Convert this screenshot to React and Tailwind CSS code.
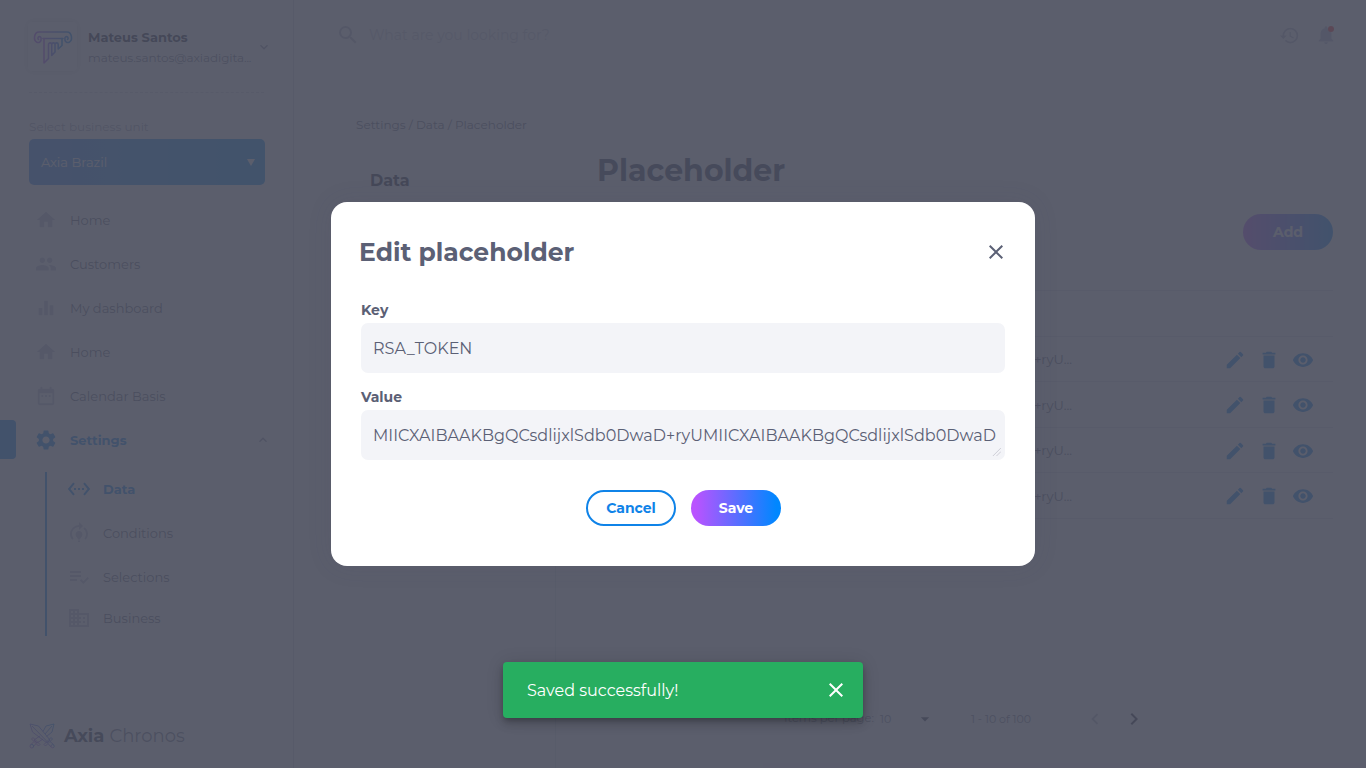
import {
  MdArrowDropDown, MdBusiness, MdChevronLeft, MdChevronRight, MdClose, MdDateRange, MdDelete, MdEdit,
  MdEqualizer, MdExpandLess, MdExpandMore, MdHistory, MdHome, MdModelTraining, MdNotifications, MdPeople,
  MdPlaylistAddCheck, MdSearch, MdSettings, MdSettingsEthernet, MdVisibility,
} from "react-icons/md";

const nav = [
  { label: "Home", Icon: MdHome },
  { label: "Customers", Icon: MdPeople },
  { label: "My dashboard", Icon: MdEqualizer },
  { label: "Home", Icon: MdHome },
  { label: "Calendar Basis", Icon: MdDateRange },
];

const subNav = [
  { label: "Conditions", Icon: MdModelTraining, height: "h-[44px]" },
  { label: "Selections", Icon: MdPlaylistAddCheck, height: "h-[44px]" },
  { label: "Business", Icon: MdBusiness, height: "h-[38px]" },
];

function ColumnLogo() {
  return (
    <svg viewBox="0 0 40 34" className="h-[34px] w-[40px]" fill="none" strokeWidth="1.6" strokeLinejoin="round" strokeLinecap="round">
      <defs>
        <linearGradient id="column" x1="0" y1="0" x2="1" y2="0">
          <stop offset="0" stopColor="#b14bf4" />
          <stop offset="1" stopColor="#0a87f0" />
        </linearGradient>
      </defs>
      <g stroke="url(#column)">
        <path d="M10 8.500H30M5.500 9.500a1.600 1.600 0 1 1 2.600-1.200C8.600 11.500 6 13.200 3.800 12.200C.2 10.500 .8 2 6 2H34c5.200 0 5.800 8.500 2.200 10.200C34 13.200 31.400 11.500 31.900 8.300A1.600 1.600 0 1 1 34.500 9.500" />
        <path d="M11 8.500V33L15.500 28.500V14.500a1.600 1.600 0 0 1 3.200 0V25.500L22 22V14.500a1.600 1.600 0 0 0-3.200 0M22 20.500V14.500a1.600 1.600 0 0 1 3.200 0V19L29 15.500V8.500" />
      </g>
    </svg>
  );
}

function SwordsLogo() {
  return (
    <svg viewBox="0 0 26 26" className="h-[26px] w-[26px]" fill="none" strokeWidth="0.9" strokeLinejoin="round">
      <defs>
        <linearGradient id="swords" x1="0" y1="1" x2="1" y2="0">
          <stop offset="0" stopColor="#c44be4" />
          <stop offset="1" stopColor="#0a87f0" />
        </linearGradient>
      </defs>
      <g stroke="url(#swords)">
        <path d="M1 1l8.500 2L21 17l-3 3L3.500 9zM3 3l15.500 16M15 21.500l7-7 1.500 1.500-7 7zM19 20.500l3 3.500M21 18.500l3.500 3" />
        <circle cx="23.600" cy="23.200" r="1.600" />
        <path d="M14 8.500L17 3l8-2-2 8-5.500 4.500M23 3l-7 8M11 13L5 17l3 3 6-4M2.500 16l7 7L11 21.500l-7-7zM5 18.500l-3 3M7 20.500L4 24" />
        <circle cx="2.800" cy="23.200" r="1.800" />
      </g>
    </svg>
  );
}

function Sidebar() {
  return (
    <aside className="flex w-[294px] shrink-0 flex-col border-r border-[#d5d7df] bg-white">
      <div className="mx-[29px] flex h-[93px] items-start border-b border-dashed border-[#d0d3dc] pt-[22px]">
        <div className="-ml-[1px] flex size-[49px] shrink-0 items-center justify-center rounded-[4px] bg-white shadow-[0_0_8px_rgba(0,0,0,0.2)]">
          <ColumnLogo />
        </div>
        <div className="ml-[11px] w-[172px] shrink-0 pt-[5px] whitespace-nowrap">
          <div className="text-[13px] leading-[20px] font-bold text-[#20253a]">Mateus Santos</div>
          <div className="pt-[1px] text-[12px] leading-[20px] tracking-[-0.08px] text-[#6b7084]">mateus.santos@axiadigita...</div>
        </div>
        <MdExpandMore className="mt-[17px] -ml-[4px] size-[16px] shrink-0 text-[#8a90a4]" />
      </div>

      <div className="mx-[29px] mt-[25px] h-[21px] text-[12px] leading-[18px] text-[#9ca1b0]">Select business unit</div>
      <div className="mx-[29px] flex h-[46px] w-[236px] items-center justify-between rounded-[5px] bg-linear-to-r/srgb from-[#3087f4] to-[#0090f4] pr-[10px] pl-[12px] text-[13px] text-white">
        <span className="pt-[2px]">Axia Brazil</span>
        <svg viewBox="0 0 8 7" className="h-[7px] w-[8px]" fill="currentColor"><path d="M0 0h8L4 7z" /></svg>
      </div>

      <nav className="mt-[13px] text-[13px] text-[#5b6075]">
        {nav.map(({ label, Icon }, i) => (
          <div key={i} className="flex h-[44px] items-center pl-[35px]">
            <Icon className="size-[22px] text-[#bcc0d6]" />
            <span className="ml-[13px] pt-[2px]">{label}</span>
          </div>
        ))}
        <div className="flex h-[44px] items-center text-[#0080f0]">
          <div className="mb-[1px] h-[39px] w-[16px] rounded-r-[4px] bg-[#0080f0]" />
          <MdSettings className="ml-[18px] size-[24px]" />
          <span className="ml-[12px] pt-[2px] font-bold">Settings</span>
          <MdExpandLess className="mr-[22px] ml-auto size-[16px] text-[#8a90a4]" />
        </div>
        <div className="mt-[10px] ml-[45px] flex h-[164px] flex-col border-l-2 border-[#0080f0]">
          <div className="mt-[-5px] flex h-[44px] shrink-0 items-center pl-[20px] text-[#0080f0]">
            <MdSettingsEthernet className="size-[24px]" />
            <span className="ml-[12px] pt-[2px] font-bold">Data</span>
          </div>
          {subNav.map(({ label, Icon, height }) => (
            <div key={label} className={"flex shrink-0 items-center pl-[20px] " + height}>
              <Icon className="size-[24px] text-[#bcc0d6]" />
              <span className="ml-[12px] pt-[2px]">{label}</span>
            </div>
          ))}
        </div>
      </nav>

      <div className="mt-auto mb-[19px] ml-[29px] flex items-center text-[18px] leading-[26px] text-[#30354a]">
        <SwordsLogo />
        <span className="ml-[9px] font-bold">Axia</span>
        <span className="ml-[5px] text-[#6b7084]">Chronos</span>
      </div>
    </aside>
  );
}

function Row({ height }) {
  return (
    <div className={"flex items-center border-b border-[#dfe1e8] text-[13px] text-[#5b6075] " + height}>
      <span className="ml-[150px] w-[325px] pt-[2px] text-right whitespace-nowrap">MIICXAIBAAKBgQCsdlijxlSdb0DwaD+ryU...</span>
      <div className="mr-[19px] ml-auto flex gap-[12px] pt-[1px] text-[#0080f0]">
        <MdEdit className="size-[22px]" />
        <MdDelete className="size-[22px]" />
        <MdVisibility className="size-[22px]" />
      </div>
    </div>
  );
}

function Page() {
  return (
    <div className="flex h-full min-w-0 flex-1 flex-col bg-[#fafafc]">
      <header className="flex h-[70px] shrink-0 items-center bg-white pr-[29px] pl-[36px]">
        <div className="flex h-[46px] w-[420px] items-center rounded-[5px] bg-[#fafafc] pl-[6px] text-[14px] text-[#c9ccd6]">
          <MdSearch className="size-[24px] text-[#b4b8c6]" />
          <span className="ml-[9px]">What are you looking for?</span>
        </div>
        <MdHistory className="ml-auto size-[21px] text-[#b4b8cb]" />
        <div className="relative ml-[15px]">
          <MdNotifications className="size-[22px] text-[#b4b8d0]" />
          <span className="absolute top-[2px] right-[3px] size-[6px] rounded-full bg-[#ff2020]" />
        </div>
      </header>

      <div className="mt-[46px] ml-[62px] h-[18px] text-[12px] leading-[18px] text-[#5b6075]">Settings / Data / Placeholder</div>
      <div className="flex min-h-0 flex-1">
        <div className="flex w-[262px] shrink-0 flex-col">
          <div className="h-[106px] pt-[35px] pl-[76px] text-[16px] font-bold text-[#20253a]">Data</div>
          <div className="flex-1 border-r border-[#e2e4ea]" />
        </div>
        <main className="flex flex-1 flex-col pr-[33px] pl-[41px]">
          <h1 className="mt-[15px] text-[30px] leading-[44px] font-bold text-[#30354f]">Placeholder</h1>
          <div className="mt-[21px] flex h-[36px] w-[90px] items-center justify-center self-end rounded-full bg-linear-to-r/srgb from-[#b953ff] to-[#0087ff] text-[14px] font-bold text-white">Add</div>
          <div className="mt-[40px] h-[47px] border-y border-[#dfe1e8]" />
          <Row height="h-[45px]" />
          <Row height="h-[46px]" />
          <Row height="h-[45px]" />
          <Row height="h-[46px]" />
          <div className="mt-[188px] ml-[187px] flex h-[24px] items-center text-[11px] whitespace-nowrap text-[#6b7084]">
            <span className="w-[96px] text-[11.5px]">Items per page:</span>
            <span className="w-[35px]">10</span>
            <MdArrowDropDown className="size-[20px] text-[#30354a]" />
            <span className="ml-[36px] w-[113px]">1 - 10 of 100</span>
            <MdChevronLeft className="size-[22px] text-[#b0b4c0]" />
            <MdChevronRight className="ml-[16px] size-[24px] text-[#20253a]" />
          </div>
        </main>
      </div>
    </div>
  );
}

function Dialog() {
  return (
    <div className="flex h-[364px] w-[704px] flex-col rounded-[16px] bg-white px-[30px] text-[#5b6075] shadow-[0_0_24px_rgba(70,70,100,0.12)]">
      <div className="-ml-[2px] flex h-[100px] items-center justify-between">
        <h2 className="pt-[2px] text-[25px] font-bold">Edit placeholder</h2>
        <MdClose className="-mr-[3px] size-[24px]" />
      </div>
      <label className="h-[21px] text-[14px] leading-[16px] font-bold">Key</label>
      <div className="flex h-[50px] items-center rounded-[7px] bg-[#f3f4f8] pt-[2px] pl-[12px] text-[16px]">RSA_TOKEN</div>
      <label className="mt-[16px] h-[21px] text-[14px] leading-[16px] font-bold">Value</label>
      <div className="relative flex h-[50px] items-center rounded-[7px] bg-[#f3f4f8] pt-[2px] pl-[12px] text-[16px] tracking-[0.016px] whitespace-nowrap">
        MIICXAIBAAKBgQCsdlijxlSdb0DwaD+ryUMIICXAIBAAKBgQCsdlijxlSdb0DwaD
        <svg viewBox="0 0 10 10" className="absolute right-[4px] bottom-[4px] size-[9px]" stroke="#b9bbc6" strokeWidth="0.7"><path d="M1 10L10 1M5 10l5-5" /></svg>
      </div>
      <div className="mt-[30px] flex justify-center gap-[15px] text-[14px] font-bold">
        <button className="h-[36px] w-[90px] rounded-full border-2 border-[#0f83e8] pl-[1px] text-[#0f83e8]">Cancel</button>
        <button className="h-[36px] w-[90px] rounded-full bg-linear-to-r/srgb from-[#b953ff] from-5% to-[#0087ff] to-95% pl-[1px] text-white">Save</button>
      </div>
    </div>
  );
}

export default function App() {
  return (
    <div className="relative flex h-[768px] w-[1366px] overflow-hidden font-['Montserrat','Inter',sans-serif]">
      <Sidebar />
      <Page />
      <div className="absolute inset-0 flex items-center justify-center bg-[#494c5c]/90">
        <Dialog />
      </div>
      <div className="absolute bottom-[50px] left-[503px] flex h-[56px] w-[360px] items-center justify-between rounded-[4px] bg-[#27ae60] pr-[15px] pl-[24px] text-[16px] text-white shadow-[0_3px_5px_-1px_rgba(0,0,0,0.2),0_6px_10px_0_rgba(0,0,0,0.14),0_1px_18px_0_rgba(0,0,0,0.12)]">
        <span className="pt-[2px]">Saved successfully!</span>
        <MdClose className="size-[24px]" />
      </div>
    </div>
  );
}
